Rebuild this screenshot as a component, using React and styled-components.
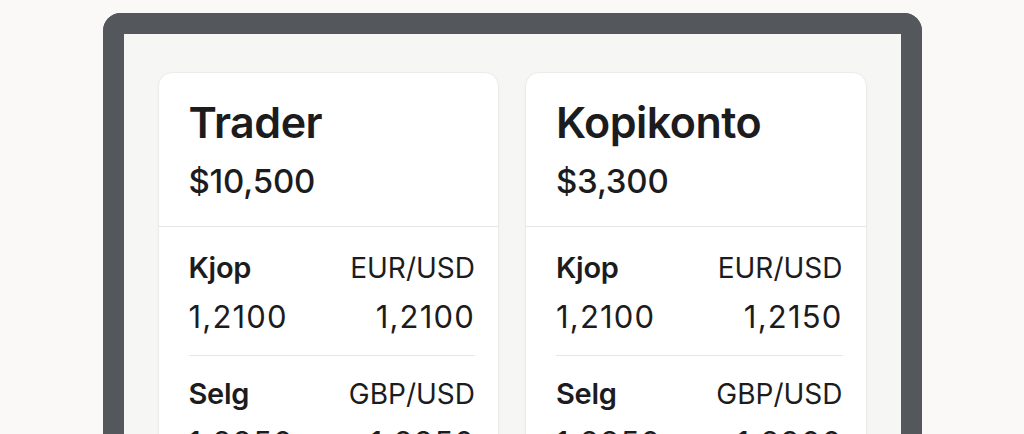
import React from 'react';
import styled, { createGlobalStyle } from 'styled-components';

const GlobalStyle = createGlobalStyle`
    html, body {
        margin: 0;
        padding: 0;
        background: #faf9f7;
        height: 434px;
        overflow: hidden;
    }
    body {
        font-family: Inter, "Noto Sans", sans-serif;
        color: #1c1c1e;
    }
`;

const Page = styled.div`
    padding-top: 13px;
`;

const Frame = styled.div`
    width: 819px;
    margin: 0 auto;
    box-sizing: border-box;
    border: 21px solid #54585d;
    border-bottom: none;
    border-radius: 18px 18px 0 0;
    background: #f6f6f5;
    height: 460px;
    padding: 38px 34px 0 34px;
`;

const Grid = styled.div`
    display: grid;
    grid-template-columns: 1fr 1fr;
    gap: 26px;
`;

const Card = styled.div`
    background: #ffffff;
    border: 1px solid #ebebe9;
    border-radius: 14px;
    box-shadow: 0 1px 3px rgba(0, 0, 0, 0.03);
`;

const Header = styled.div`
    padding: 24px 24px 25px 30px;
    border-bottom: 1px solid #e6e6e6;
`;

const Title = styled.div`
    font-size: 43px;
    line-height: 1.2;
    font-weight: 600;
    letter-spacing: -0.5px;
`;

const Balance = styled.div`
    margin-top: 13px;
    font-size: 33px;
    line-height: 1.2;
    font-weight: 500;
    letter-spacing: -0.2px;
`;

const Body = styled.div`
    padding: 3px 23px 0 30px;
`;

const Row = styled.div`
    padding: 21px 0 20px;
    border-bottom: 1px solid #e6e6e6;
`;

const Line = styled.div`
    display: flex;
    justify-content: space-between;
    align-items: baseline;
    margin-top: ${(p) => (p.$second ? '12px' : '0')};
`;

const Side = styled.span`
    font-size: 29px;
    line-height: 1.2;
    font-weight: 600;
    letter-spacing: -0.3px;
`;

const Pair = styled.span`
    font-size: 28px;
    line-height: 1.2;
    font-weight: 400;
`;

const Price = styled.span`
    font-size: 31px;
    line-height: 1.2;
    font-weight: 400;
    letter-spacing: 1.2px;
`;

const accounts = [
    {
        name: 'Trader',
        balance: '$10,500',
        rows: [
            { side: 'Kjop', pair: 'EUR/USD', a: '1,2100', b: '1,2100' },
            { side: 'Selg', pair: 'GBP/USD', a: '1,2850', b: '1,2850' },
        ],
    },
    {
        name: 'Kopikonto',
        balance: '$3,300',
        rows: [
            { side: 'Kjop', pair: 'EUR/USD', a: '1,2100', b: '1,2150' },
            { side: 'Selg', pair: 'GBP/USD', a: '1,2850', b: '1,2900' },
        ],
    },
];

function App() {
    return (
        <Page>
            <GlobalStyle />
            <Frame>
                <Grid>
                    {accounts.map((acc) => (
                        <Card key={acc.name}>
                            <Header>
                                <Title>{acc.name}</Title>
                                <Balance>{acc.balance}</Balance>
                            </Header>
                            <Body>
                                {acc.rows.map((r) => (
                                    <Row key={r.pair}>
                                        <Line>
                                            <Side>{r.side}</Side>
                                            <Pair>{r.pair}</Pair>
                                        </Line>
                                        <Line $second>
                                            <Price>{r.a}</Price>
                                            <Price>{r.b}</Price>
                                        </Line>
                                    </Row>
                                ))}
                            </Body>
                        </Card>
                    ))}
                </Grid>
            </Frame>
        </Page>
    );
}

export default App;
